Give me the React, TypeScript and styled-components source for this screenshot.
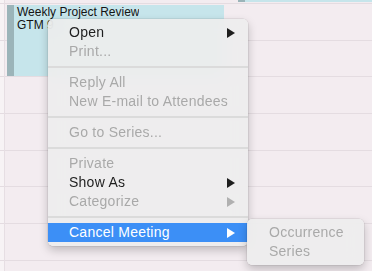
import React from "react";
import styled, { createGlobalStyle } from "styled-components";

const GlobalStyle = createGlobalStyle`
  html, body { margin: 0; padding: 0; }
  body { font-family: "Liberation Sans", Arial, sans-serif; }
`;

const Screen = styled.div`
  position: relative;
  width: 372px;
  height: 271px;
  overflow: hidden;
  display: flex;
  background: #f3ecf0;
`;

const Gutter = styled.div`
  width: 4px;
  flex: none;
  border-right: 1px solid #e6dee3;
  background-color: #f7f3f5;
  background-image: repeating-linear-gradient(
    to bottom,
    #e4dce1 0px,
    #e4dce1 1px,
    transparent 1px,
    transparent 36.67px
  );
  background-position: 0 3px;
`;

const DayColumn = styled.div`
  position: relative;
  flex: 1;
  background-image: repeating-linear-gradient(
    to bottom,
    #e4dce1 0px,
    #e4dce1 1px,
    transparent 1px,
    transparent 36.67px
  );
  background-position: 0 3px;
`;

const EventBlock = styled.div<{ $left: number; $top: number; $width: number; $height: number }>`
  position: absolute;
  left: ${(p) => p.$left}px;
  top: ${(p) => p.$top}px;
  width: ${(p) => p.$width}px;
  height: ${(p) => p.$height}px;
  display: flex;
  background: #c6e5eb;
`;

const EventStripe = styled.div`
  width: 7px;
  flex: none;
  background: #9bb4b9;
`;

const EventText = styled.div`
  padding: 1px 0 0 3px;
  font-size: 12px;
  line-height: 13px;
  color: #141414;
  white-space: nowrap;
  overflow: hidden;
`;

const Menu = styled.div<{ $left: number; $top: number; $width: number }>`
  position: absolute;
  left: ${(p) => p.$left}px;
  top: ${(p) => p.$top}px;
  width: ${(p) => p.$width}px;
  padding: 4px 0;
  display: flex;
  flex-direction: column;
  border-radius: 5px;
  background: rgba(237, 237, 237, 0.9);
  backdrop-filter: blur(8px);
  box-shadow: 0 0 0 0.5px rgba(0, 0, 0, 0.12), 0 4px 10px rgba(0, 0, 0, 0.22);
  font-size: 14px;
  letter-spacing: 0.25px;
`;

const Item = styled.div<{ $disabled?: boolean; $active?: boolean; $pad: number }>`
  height: 19px;
  display: flex;
  align-items: center;
  justify-content: space-between;
  padding: 0 13px 0 ${(p) => p.$pad}px;
  line-height: 19px;
  white-space: nowrap;
  color: ${(p) => (p.$active ? "#ffffff" : p.$disabled ? "#a9a9a9" : "#1e1e1e")};
  background: ${(p) => (p.$active ? "#3c8ff6" : "transparent")};
`;

const Separator = styled.div`
  height: 12px;
  display: flex;
  align-items: center;
  &::after {
    content: "";
    flex: 1;
    height: 2px;
    background: #dbdbdb;
  }
`;

const Arrow = ({ color }: { color: string }) => (
  <svg width="8" height="10" viewBox="0 0 8 10">
    <polygon points="0,0 8,5 0,10" fill={color} />
  </svg>
);

type Entry =
  | { kind: "sep" }
  | { kind: "item"; label: string; disabled?: boolean; sub?: boolean; active?: boolean };

const entries: Entry[] = [
  { kind: "item", label: "Open", sub: true },
  { kind: "item", label: "Print...", disabled: true },
  { kind: "sep" },
  { kind: "item", label: "Reply All", disabled: true },
  { kind: "item", label: "New E-mail to Attendees", disabled: true },
  { kind: "sep" },
  { kind: "item", label: "Go to Series...", disabled: true },
  { kind: "sep" },
  { kind: "item", label: "Private", disabled: true },
  { kind: "item", label: "Show As", sub: true },
  { kind: "item", label: "Categorize", disabled: true, sub: true },
  { kind: "sep" },
  { kind: "item", label: "Cancel Meeting", sub: true, active: true },
];

export default function App() {
  return (
    <>
      <GlobalStyle />
      <Screen>
        <Gutter />
        <DayColumn>
          <EventBlock $left={2} $top={5} $width={217} $height={71}>
            <EventStripe />
            <EventText>
              Weekly Project Review
              <br />
              GTM 9
            </EventText>
          </EventBlock>
          <EventBlock $left={233} $top={-20} $width={140} $height={22}>
            <EventStripe />
          </EventBlock>
        </DayColumn>

        <Menu $left={48} $top={19} $width={200}>
          {entries.map((e, i) =>
            e.kind === "sep" ? (
              <Separator key={i} />
            ) : (
              <Item key={i} $pad={21} $disabled={e.disabled} $active={e.active}>
                <span>{e.label}</span>
                {e.sub && (
                  <Arrow color={e.active ? "#ffffff" : e.disabled ? "#b0b0b0" : "#1e1e1e"} />
                )}
              </Item>
            )
          )}
        </Menu>

        <Menu $left={247} $top={219} $width={117}>
          <Item $pad={22} $disabled>
            <span>Occurrence</span>
          </Item>
          <Item $pad={22} $disabled>
            <span>Series</span>
          </Item>
        </Menu>
      </Screen>
    </>
  );
}
